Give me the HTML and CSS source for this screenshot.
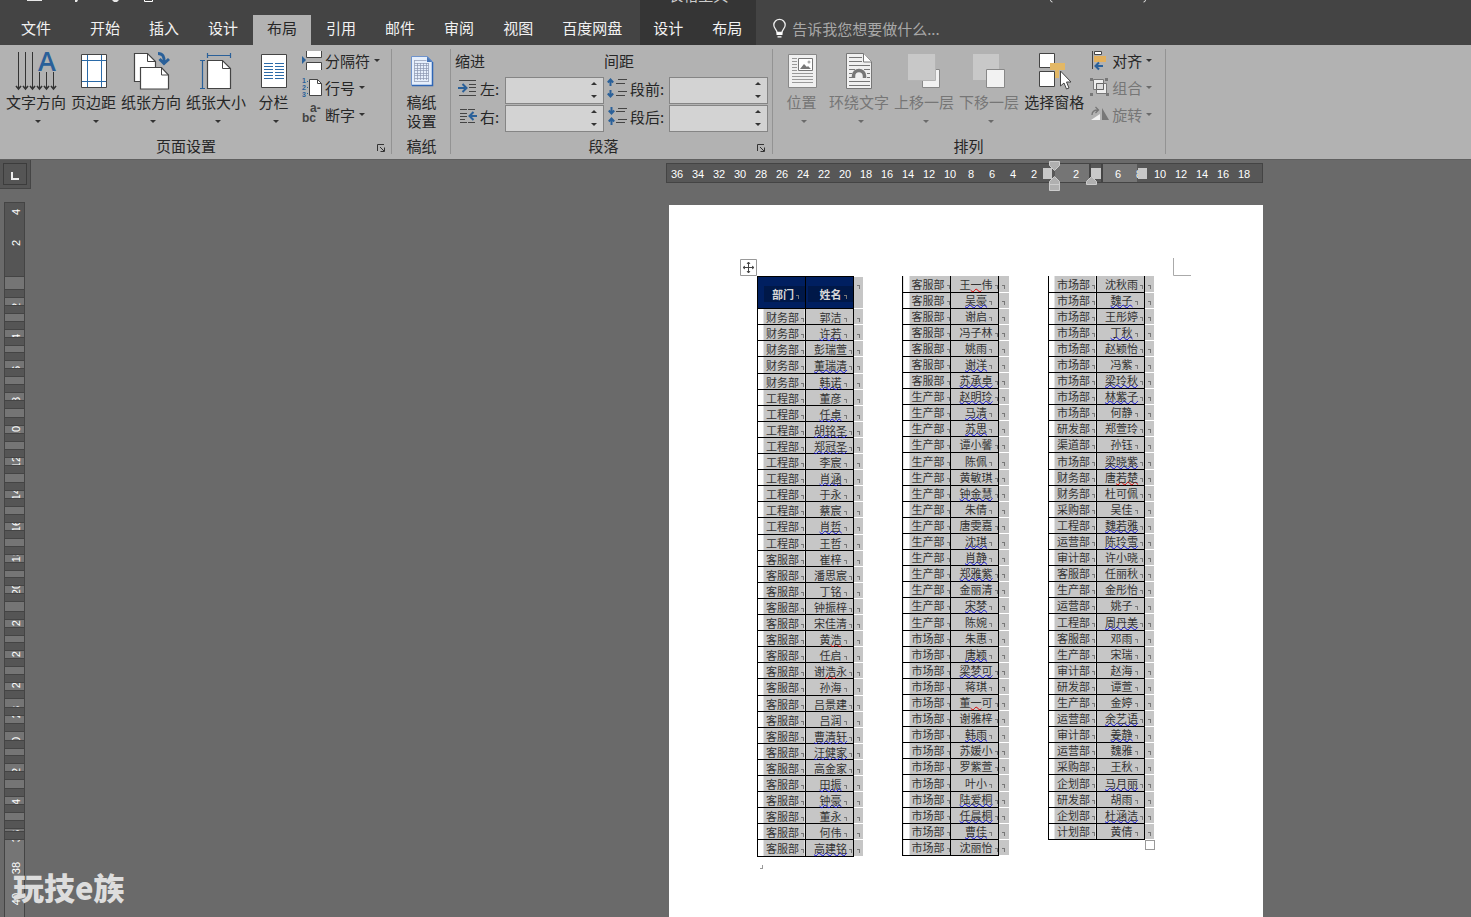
FILE: index.html
```html
<!DOCTYPE html>
<html lang="zh-CN">
<head>
<meta charset="utf-8">
<title>Word</title>
<link rel="stylesheet" href="styles.css">
</head>
<body>
<header class="top">
  <div class="titlebar">
    <svg class="title-bits" width="1160" height="6" aria-hidden="true"><path d="M27 0h15v1H27zM75 0h3l-1 2h-2zM112 0h7l-2 2h-3z" fill="#e8e8e8"/><path d="M144.500 0v1.500h8V0" fill="none" stroke="#fff"/><path d="M1050.500 0q0 2 2 2M1145.500 0q0 2-2 2" fill="none" stroke="#ddd"/></svg>
  </div>
  <nav class="tabs">
    <button class="tab file">文件</button>
    <button class="tab">开始</button>
    <button class="tab">插入</button>
    <button class="tab">设计</button>
    <button class="tab active">布局</button>
    <button class="tab">引用</button>
    <button class="tab">邮件</button>
    <button class="tab">审阅</button>
    <button class="tab">视图</button>
    <button class="tab">百度网盘</button>
    <div class="context">
      <span class="context-name">表格工具</span>
      <button class="tab">设计</button>
      <button class="tab">布局</button>
    </div>
    <button class="tell">
      <svg width="13" height="19" viewBox="0 0 13 19"><path d="M4 13.500C4 10.500.8 9.500.8 6a5.700 5.700 0 0 1 11.400 0c0 3.500-3.200 4.500-3.200 7.500z" fill="none" stroke="#eee" stroke-width="1.300"/><path d="M3.500 13.500h6v2.500h-6zM4.500 17.200h4v1.300h-4z" fill="#fff"/></svg>
      <span>告诉我您想要做什么...</span>
    </button>
  </nav>
</header>

<section class="ribbon">
  <div class="group page-setup">
    <div class="group-body">
      <button class="big">
        <svg width="42" height="41" viewBox="0 0 42 41"><path d="M3.500 2v36M10.500 2v36M17.500 2v36M24.500 22v16M31.500 22v16M38.500 22v16" stroke="#333"/><path d="M1 36l2.500 3L6 36M8 36l2.500 3 2.500-3M15 36l2.500 3 2.500-3M22 36l2.500 3 2.500-3M29 36l2.500 3 2.500-3M36 36l2.500 3 2.500-3" fill="none" stroke="#333" stroke-width="1.600"/><text class="letter-a" x="32" y="21">A</text></svg>
        <span>文字方向</span><i class="arrow"></i>
      </button>
      <button class="big">
        <svg width="28" height="41" viewBox="0 0 28 41"><path d="M1.500 4.500h25v33h-25z" fill="#fff" stroke="#444"/><path d="M7.500 5v32M21.500 5v32M2 10.500h24M2 31.500h24" stroke="#2a6aa8"/></svg>
        <span>页边距</span><i class="arrow"></i>
      </button>
      <button class="big">
        <svg width="40" height="41" viewBox="0 0 40 41"><path d="M3.500 3.500h13l8 8v20h-21z" fill="#fff" stroke="#444" stroke-width="1.200"/><path d="M16.500 3.500v8h8" fill="none" stroke="#444"/><path d="M9.500 17.500h21l7 7.500v14h-28z" fill="#fff" stroke="#444" stroke-width="1.200"/><path d="M30.500 17.500V25h7" fill="none" stroke="#444"/><path d="M27 3.500q7 0 6 9M28.500 9l4.500 4.500L38 9" fill="none" stroke="#2a6099" stroke-width="3"/></svg>
        <span>纸张方向</span><i class="arrow"></i>
      </button>
      <button class="big">
        <svg width="34" height="41" viewBox="0 0 34 41"><path d="M8.500 10.500h15l8 8v20h-23z" fill="#fff" stroke="#444" stroke-width="1.200"/><path d="M23.500 10.500v8h8" fill="none" stroke="#444"/><path d="M8.500 3v5M31.500 3v5M8.500 5.500h23M1 10.500h5M1 38.500h5M3.500 10.500v28" fill="none" stroke="#2a6099" stroke-width="1.200"/></svg>
        <span>纸张大小</span><i class="arrow"></i>
      </button>
      <button class="big">
        <svg width="28" height="41" viewBox="0 0 28 41"><path d="M1.500 4.500h25v33h-25z" fill="#fff" stroke="#444"/><path d="M4 13.500h9M15 13.500h9M4 16.500h9M15 16.500h9M4 19.500h9M15 19.500h9M4 22.500h9M15 22.500h9M4 25.500h9M15 25.500h9M4 28.500h9M15 28.500h9" stroke="#2a6aa8"/></svg>
        <span>分栏</span><i class="arrow"></i>
      </button>
      <div class="small-stack">
        <button class="small">
          <svg width="21" height="20" viewBox="0 0 21 20"><path d="M4.500 1v6.500h15V1M4.500 20v-7.500h15V20" fill="#fff" stroke="#444"/><path d="M0 6l4 4-4 4z" fill="#2a6099"/></svg>
          <span>分隔符</span><i class="arrow"></i>
        </button>
        <button class="small">
          <svg width="21" height="20" viewBox="0 0 21 20"><path d="M7.500 2.500h8l4 4v12h-12z" fill="#fff" stroke="#444"/><path d="M15.500 2.500v4h4" fill="none" stroke="#444"/><g class="digits"><text x="0" y="6">1</text><text x="0" y="13">2</text><text x="0" y="20">3</text></g><path d="M5.500 4v1M5.500 10v1M5.500 16v1" stroke="#2a6099"/></svg>
          <span>行号</span><i class="arrow"></i>
        </button>
        <button class="small">
          <svg width="21" height="20" viewBox="0 0 21 20"><g class="abc"><text x="8" y="8">a-</text><text x="0" y="18">bc</text></g></svg>
          <span>断字</span><i class="arrow"></i>
        </button>
      </div>
    </div>
    <div class="group-foot"><span>页面设置</span><button class="launcher" aria-label="页面设置选项"><svg width="8" height="8" viewBox="0 0 8 8"><path d="M.5 7V.5H7M3 3l4 4M7.500 3.500v4h-4" fill="none" stroke="#333"/></svg></button></div>
  </div>

  <div class="group manuscript">
    <div class="group-body">
      <button class="big">
        <svg width="24" height="41" viewBox="0 0 24 41"><path d="M1.500 6.500h16l5 5v24h-21z" fill="#e6effc" stroke="#6f93cc"/><path d="M22.500 12v23.500H2" fill="none" stroke="#2f66b5" stroke-width="1.500"/><path d="M17 6.500v5.500h5.500z" fill="#4a78b8"/><path d="M4.500 10.500h12M4.500 13.500h14M4.500 15.500h14M4.500 18.500h14M4.500 20.500h14M4.500 23.500h14M4.500 25.500h14M4.500 28.500h14M4.500 31.500h14M4.500 10v22M7.500 13v17M10.500 13v17M13.500 13v17M16.500 13v17M18.500 13v19" stroke="#8b97b0" stroke-width=".7"/></svg>
        <span>稿纸<br>设置</span>
      </button>
    </div>
    <div class="group-foot"><span>稿纸</span></div>
  </div>

  <div class="group paragraph">
    <div class="group-body fields">
      <div class="heading">缩进</div>
      <div class="heading">间距</div>
      <div class="field">
        <label for="indent-left"><svg width="19" height="18" viewBox="0 0 19 18"><path d="M1 1.500h17M11 5.500h7M11 8.500h7M11 12.500h7M1 16.500h17" stroke="#444"/><path d="M0 9h7M4.500 5l4 4-4 4" fill="none" stroke="#2a6099" stroke-width="2"/></svg>左:</label>
        <div class="spin"><input id="indent-left" type="text"><i class="up"></i><i class="down"></i></div>
      </div>
      <div class="field">
        <label for="space-before"><svg width="20" height="20" viewBox="0 0 20 20"><path d="M11 1.500h9M9 5.500h9M11 13.500h9M9 17.500h9" stroke="#444"/><path d="M3.500 2v6M3.500 12v6M.8 4.500L3.500 1.500l2.700 3M.8 15.500l2.700 3 2.700-3" fill="none" stroke="#2a6099" stroke-width="2"/></svg>段前:</label>
        <div class="spin"><input id="space-before" type="text"><i class="up"></i><i class="down"></i></div>
      </div>
      <div class="field">
        <label for="indent-right"><svg width="19" height="18" viewBox="0 0 19 18"><path d="M2 2.500h16M2 6.500h7M2 9.500h7M2 12.500h5M2 15.500h16" stroke="#444" stroke-dasharray="7 1"/><path d="M19 9h-6M15.500 5l-4 4 4 4" fill="none" stroke="#2a6099" stroke-width="2"/></svg>右:</label>
        <div class="spin"><input id="indent-right" type="text"><i class="up"></i><i class="down"></i></div>
      </div>
      <div class="field">
        <label for="space-after"><svg width="20" height="20" viewBox="0 0 20 20"><path d="M11 2.500h9M9 5.500h9M11 13.500h9M9 16.500h9" stroke="#444"/><path d="M4.500 1v6M4.500 13v6M1.800 4.500l2.700 3 2.700-3M1.800 15.500l2.700-3 2.700 3" fill="none" stroke="#2a6099" stroke-width="2"/></svg>段后:</label>
        <div class="spin"><input id="space-after" type="text"><i class="up"></i><i class="down"></i></div>
      </div>
    </div>
    <div class="group-foot"><span>段落</span><button class="launcher" aria-label="段落选项"><svg width="8" height="8" viewBox="0 0 8 8"><path d="M.5 7V.5H7M3 3l4 4M7.500 3.500v4h-4" fill="none" stroke="#333"/></svg></button></div>
  </div>

  <div class="group arrange">
    <div class="group-body">
      <button class="big" disabled>
        <svg width="30" height="41" viewBox="0 0 30 41"><path d="M1.500 4.500h28v33h-28z" fill="#f0f0f0" stroke="#888"/><path d="M11.500 8.500h14v12h-14z" fill="#fff" stroke="#777"/><path d="M13 19l4-5 3 3 1-1 3 3z" fill="#777"/><circle cx="22" cy="12" r="1.500" fill="#aaa"/><path d="M5 8.500h5M5 11.500h5M5 14.500h5M5 17.500h5M5 20.500h5M5 23.500h21M5 26.500h21M5 29.500h21M5 32.500h21" stroke="#999"/></svg>
        <span>位置</span><i class="arrow"></i>
      </button>
      <button class="big" disabled>
        <svg width="28" height="41" viewBox="0 0 28 41"><path d="M1.500 3.500h17l8 8v27h-25z" fill="#f0f0f0" stroke="#777"/><path d="M18.500 3.500v8.500h8" fill="#fff" stroke="#777"/><path d="M4 7.500h13M4 11.500h13M4 15.500h21M4 19.500h6M19 19.500h6M4 23.500h3M22 23.500h3M4 27.500h3M22 27.500h3M4 31.500h21M4 35.500h21" stroke="#777"/><path d="M8.500 28v-2a5.500 5.500 0 0 1 11 0v2" fill="none" stroke="#777" stroke-width="3.500"/></svg>
        <span>环绕文字</span><i class="arrow"></i>
      </button>
      <button class="big" disabled>
        <svg width="34" height="41" viewBox="0 0 34 41"><path d="M15.500 19.500h17v18h-17z" fill="#f2f2f2" stroke="#888"/><path d="M1 4h27v26H1z" fill="#c8c8c8"/><path d="M1 30.500h27.500V5" fill="none" stroke="#b4b4b4"/></svg>
        <span>上移一层</span><i class="arrow"></i>
      </button>
      <button class="big" disabled>
        <svg width="34" height="41" viewBox="0 0 34 41"><path d="M1 4h26v26H1z" fill="#c8c8c8"/><path d="M14.500 19.500h18v18h-18z" fill="#f2f2f2" stroke="#888"/></svg>
        <span>下移一层</span><i class="arrow"></i>
      </button>
      <button class="big">
        <svg width="34" height="41" viewBox="0 0 34 41"><path d="M2.500 3.500h15v14h-15zM2.500 21.500h15v15h-15z" fill="#fff" stroke="#444"/><path d="M13 13h15v7h-6v8h-4v-8h-5z" fill="#e3b866"/><path d="M23.500 21v15l3.500-3 2.500 6 2.500-1-2.500-6h4.500z" fill="#fff" stroke="#444"/></svg>
        <span>选择窗格</span>
      </button>
      <div class="small-stack">
        <button class="small">
          <svg width="20" height="20" viewBox="0 0 20 20"><path d="M2.500 1v18" stroke="#444"/><path d="M4.500 1.500h7v3h-7z" fill="#fff" stroke="#444"/><path d="M4 6h12v6H4z" fill="#e3b05c"/><path d="M13 16H6M9 12.500L5.500 16 9 19.500" fill="none" stroke="#2a6099" stroke-width="2"/></svg>
          <span>对齐</span><i class="arrow"></i>
        </button>
        <button class="small" disabled>
          <svg width="20" height="20" viewBox="0 0 20 20"><path d="M3.500 2.500h10v10h-10zM6.500 6.500h10v10h-10z" fill="#eee" stroke="#777"/><path d="M6.500 6.500h7v6h-7z" fill="#ddd" stroke="#666"/><path d="M0 1h3v3H0zM15 1h3v3h-3zM0 16h3v3H0zM16 16h3v3h-3z" fill="#777"/></svg>
          <span>组合</span><i class="arrow"></i>
        </button>
        <button class="small" disabled>
          <svg width="20" height="20" viewBox="0 0 20 20"><path d="M12 4l7 12h-7z" fill="#777"/><path d="M1 16l9-6v6z" fill="#f2f2f2"/><path d="M2 11q0-5 6-5M5.500 3L8.500 6l-3 3" fill="none" stroke="#777" stroke-width="1.300"/></svg>
          <span>旋转</span><i class="arrow"></i>
        </button>
      </div>
    </div>
    <div class="group-foot"><span>排列</span></div>
  </div>
</section>

<main class="workspace">
  <aside class="side">
    <button class="tab-stop" aria-label="左对齐制表符"><span><svg width="8" height="8" viewBox="0 0 8 8"><path d="M1 0v7h7" fill="none" stroke="#eee" stroke-width="2"/></svg></span></button>
    <svg class="v-ruler" width="21" height="760" viewBox="0 203 21 760">
      <path d="M0 203h20v760H0z" fill="#757575"/>
      <g class="v-num">
        <text transform="translate(16 307) rotate(-90)">2</text><text transform="translate(16 338) rotate(-90)">4</text><text transform="translate(16 370) rotate(-90)">6</text><text transform="translate(16 401) rotate(-90)">8</text><text transform="translate(16 433) rotate(-90)">10</text><text transform="translate(16 463) rotate(-90)">12</text><text transform="translate(16 495) rotate(-90)">14</text><text transform="translate(16 527) rotate(-90)">16</text><text transform="translate(16 557) rotate(-90)">18</text><text transform="translate(16 590) rotate(-90)">20</text><text transform="translate(16 621) rotate(-90)">22</text><text transform="translate(16 652) rotate(-90)">24</text><text transform="translate(16 683) rotate(-90)">26</text><text transform="translate(16 713) rotate(-90)">28</text><text transform="translate(16 744) rotate(-90)">30</text><text transform="translate(16 775) rotate(-90)">32</text><text transform="translate(16 806) rotate(-90)">34</text><text transform="translate(16 837) rotate(-90)">36</text><text transform="translate(16 869) rotate(-90)">38</text><text transform="translate(16 900) rotate(-90)">40</text>
      </g>
      <path fill="#555" stroke="#444" d="M.5 203.500h20v74H.5zM.5 290.500h20v8H.5zM.5 306.500h20v8H.5zM.5 322.500h20v8H.5zM.5 338.500h20v8H.5zM.5 353.500h20v8H.5zM.5 369.500h20v8H.5zM.5 385.500h20v8H.5zM.5 401.500h20v8H.5zM.5 418.500h20v8H.5zM.5 434.500h20v8H.5zM.5 450.500h20v8H.5zM.5 466.500h20v8H.5zM.5 483.500h20v8H.5zM.5 499.500h20v8H.5zM.5 515.500h20v8H.5zM.5 531.500h20v8H.5zM.5 547.500h20v8H.5zM.5 563.500h20v8H.5zM.5 578.500h20v8H.5zM.5 594.500h20v8H.5zM.5 612.500h20v8H.5zM.5 628.500h20v8H.5zM.5 643.500h20v8H.5zM.5 659.500h20v8H.5zM.5 675.500h20v8H.5zM.5 691.500h20v8H.5zM.5 708.500h20v8H.5zM.5 724.500h20v8H.5zM.5 741.500h20v8H.5zM.5 756.500h20v8H.5zM.5 772.500h20v8H.5zM.5 789.500h20v8H.5zM.5 805.500h20v8H.5zM.5 821.500h20v8H.5zM.5 832.500h20v8H.5z"/>
      <path d="M.5 203v760M20.500 203v760" stroke="#444"/>
      <g class="v-num"><text transform="translate(16 213) rotate(-90)">4</text><text transform="translate(16 244) rotate(-90)">2</text></g>
    </svg>
  </aside>

  <div class="canvas">
    <div class="h-ruler">
      <span>36</span><span>34</span><span>32</span><span>30</span><span>28</span><span>26</span><span>24</span><span>22</span><span>20</span><span>18</span><span>16</span><span>14</span><span>12</span><span>10</span><span>8</span><span>6</span><span>4</span><span>2</span><span></span><span>2</span><span></span><span>6</span><span>8</span><span>10</span><span>12</span><span>14</span><span>16</span><span>18</span>
      <svg class="markers" width="110" height="32" viewBox="1040 160 110 32"><path d="M1089 164h2v19h-2zM1101 164h2v19h-2z" fill="#444"/><path d="M1043 168h9v11h-9zM1091 168h10v11h-10zM1138 168h9v11h-9z" fill="#c9c9c9"/><path d="M1049.500 161.500h10v4l-5 5-5-5zM1054.500 176.500l5 5v9h-10v-9zM1049.500 184.500h10M1091.500 176.500l5 5v3h-10v-3z" fill="#b0b0b0" stroke="#ccc"/></svg>
    </div>
    <article class="page">
      <svg class="move" width="18" height="18" viewBox="0 0 18 18"><path d="M.5.5h16v16H.5z" fill="#fff" stroke="#999"/><path d="M8.500 3v11M3 8.500h11M7 5l1.500-2L10 5M7 12l1.500 2 1.500-2M5 7L3 8.500 5 10M12 7l2 1.500-2 1.500" fill="none" stroke="#444"/></svg>
      <svg class="crop" width="18" height="18" viewBox="0 0 18 18"><path d="M.5 0v17.500H18" fill="none" stroke="#aaa"/></svg>
      <table class="roster first">
        <thead><tr><th><span>部门</span><th><span>姓名</span><td></thead>
        <tbody>
        <tr><td>财务部<td>郭洁<td>
        <tr><td>财务部<td><u>许若</u><td>
        <tr><td>财务部<td>彭瑞萱<td>
        <tr><td>财务部<td><u>董瑞清</u><td>
        <tr><td>财务部<td><u>韩诺</u><td>
        <tr><td>工程部<td>董彦<td>
        <tr><td>工程部<td><u>任卓</u><td>
        <tr><td>工程部<td><u>胡铭圣</u><td>
        <tr><td>工程部<td><u>郑冠圣</u><td>
        <tr><td>工程部<td>李宸<td>
        <tr><td>工程部<td><u>肖涵</u><td>
        <tr><td>工程部<td>于永<td>
        <tr><td>工程部<td>蔡宸<td>
        <tr><td>工程部<td><u>肖哲</u><td>
        <tr><td>工程部<td>王哲<td>
        <tr><td>客服部<td>崔梓<td>
        <tr><td>客服部<td>潘思宸<td>
        <tr><td>客服部<td>丁铭<td>
        <tr><td>客服部<td>钟振梓<td>
        <tr><td>客服部<td>宋佳清<td>
        <tr><td>客服部<td>黄<s>浩</s><td>
        <tr><td>客服部<td>任启<td>
        <tr><td>客服部<td>谢<s>浩</s>永<td>
        <tr><td>客服部<td>孙海<td>
        <tr><td>客服部<td>吕景建<td>
        <tr><td>客服部<td>吕润<td>
        <tr><td>客服部<td><u>曹清轩</u><td>
        <tr><td>客服部<td><u>汪健家</u><td>
        <tr><td>客服部<td>高金家<td>
        <tr><td>客服部<td><u>田振</u><td>
        <tr><td>客服部<td><u>钟豪</u><td>
        <tr><td>客服部<td>董永<td>
        <tr><td>客服部<td>何伟<td>
        <tr><td>客服部<td><u>高建铭</u><td>
        </tbody>
      </table>
      <table class="roster">
        <tbody>
        <tr><td>客服部<td>王<s>一</s>伟<td>
        <tr><td>客服部<td><u>吴豪</u><td>
        <tr><td>客服部<td>谢启<td>
        <tr><td>客服部<td>冯子林<td>
        <tr><td>客服部<td>姚雨<td>
        <tr><td>客服部<td><u>谢洋</u><td>
        <tr><td>客服部<td><u>苏承卓</u><td>
        <tr><td>生产部<td><u>赵明玲</u><td>
        <tr><td>生产部<td><u>马清</u><td>
        <tr><td>生产部<td><u>苏思</u><td>
        <tr><td>生产部<td>谭小馨<td>
        <tr><td>生产部<td>陈佩<td>
        <tr><td>生产部<td>黄敏琪<td>
        <tr><td>生产部<td><u>钟金慧</u><td>
        <tr><td>生产部<td>朱倩<td>
        <tr><td>生产部<td>唐雯嘉<td>
        <tr><td>生产部<td><u>沈琪</u><td>
        <tr><td>生产部<td><u>肖静</u><td>
        <tr><td>生产部<td><u>郑雅紫</u><td>
        <tr><td>生产部<td>金丽清<td>
        <tr><td>生产部<td><u>宋梦</u><td>
        <tr><td>生产部<td>陈婉<td>
        <tr><td>市场部<td>朱惠<td>
        <tr><td>市场部<td><u>唐颖</u><td>
        <tr><td>市场部<td><u>梁梦可</u><td>
        <tr><td>市场部<td>蒋琪<td>
        <tr><td>市场部<td>董<s>一</s>可<td>
        <tr><td>市场部<td>谢雅梓<td>
        <tr><td>市场部<td><u>韩雨</u><td>
        <tr><td>市场部<td>苏媛小<td>
        <tr><td>市场部<td>罗紫萱<td>
        <tr><td>市场部<td>叶小<td>
        <tr><td>市场部<td><u>陆爱桐</u><td>
        <tr><td>市场部<td><u>任晨桐</u><td>
        <tr><td>市场部<td><u>曹佳</u><td>
        <tr><td>市场部<td>沈丽怡<td>
        </tbody>
      </table>
      <div class="last">
      <table class="roster">
        <tbody>
        <tr><td>市场部<td>沈秋雨<td>
        <tr><td>市场部<td><u>魏子</u><td>
        <tr><td>市场部<td>王彤婷<td>
        <tr><td>市场部<td><u>丁秋</u><td>
        <tr><td>市场部<td>赵颖怡<td>
        <tr><td>市场部<td>冯紫<td>
        <tr><td>市场部<td><u>梁玲秋</u><td>
        <tr><td>市场部<td><u>林紫子</u><td>
        <tr><td>市场部<td>何静<td>
        <tr><td>研发部<td>郑萱玲<td>
        <tr><td>渠道部<td>孙钰<td>
        <tr><td>市场部<td><u>梁晓紫</u><td>
        <tr><td>财务部<td>唐<s>若楚</s><td>
        <tr><td>财务部<td>杜可佩<td>
        <tr><td>采购部<td>吴佳<td>
        <tr><td>工程部<td><u>魏若雅</u><td>
        <tr><td>运营部<td><u>陈玲雪</u><td>
        <tr><td>审计部<td>许小晓<td>
        <tr><td>客服部<td>任丽秋<td>
        <tr><td>生产部<td>金彤怡<td>
        <tr><td>运营部<td>姚子<td>
        <tr><td>工程部<td><u>周丹美</u><td>
        <tr><td>客服部<td>邓雨<td>
        <tr><td>生产部<td>宋瑞<td>
        <tr><td>审计部<td>赵海<td>
        <tr><td>研发部<td>谭萱<td>
        <tr><td>生产部<td>金婷<td>
        <tr><td>运营部<td><u>余艺语</u><td>
        <tr><td>审计部<td><u>姜静</u><td>
        <tr><td>运营部<td>魏雅<td>
        <tr><td>采购部<td>王秋<td>
        <tr><td>企划部<td><u>马月丽</u><td>
        <tr><td>研发部<td>胡雨<td>
        <tr><td>企划部<td><u>杜涵洁</u><td>
        <tr><td>计划部<td>黄倩<td>
        </tbody>
      </table>
      <div class="resize"></div>
      </div>
      <div class="para-end"></div>
    </article>
  </div>
  <div class="watermark">玩技<span>e</span>族</div>
</main>
</body>
</html>
```

FILE: styles.css
```css
* { box-sizing: border-box; }

body {
  margin: 0;
  height: 100vh;
  display: flex;
  flex-direction: column;
  overflow: hidden;
  background: #6a6a6a;
  color: #262626;
  font: 15px/19px "Noto Sans CJK SC", sans-serif;
}

button {
  margin: 0;
  padding: 0;
  border: 0;
  background: none;
  color: inherit;
  font: inherit;
  white-space: nowrap;
}

svg { display: block; flex: none; overflow: visible; }

/* Title strip and tabs */
.top { flex: none; background: #444; overflow: hidden; }
.titlebar { height: 15px; overflow: hidden; }
.tabs { display: flex; gap: 1px; height: 30px; }
.tab { padding: 0 14px 6px; color: #f2f2f2; }
.file { padding: 0 24px 6px 21px; }
.tab.active { background: #b2b2b2; color: #262626; }

.context {
  position: relative;
  display: flex;
  gap: 1px;
  margin: -15px 0 0 3px;
  padding-top: 15px;
  background: #353535;
}
.context .tab { padding: 0 14px 6px 13px; }
.context .tab:last-child { padding-left: 14px; }
.context-name {
  position: absolute;
  top: -15px;
  left: 0;
  right: 0;
  text-align: center;
  color: #ccc;
}

.tell {
  display: flex;
  align-items: center;
  gap: 6px;
  padding: 0 16px 4px;
  color: #a8a8a8;
}

/* Ribbon */
.ribbon {
  display: flex;
  flex: none;
  height: 115px;
  background: #b2b2b2;
  border-bottom: 1px solid #606060;
}
.group {
  position: relative;
  display: flex;
  flex-direction: column;
  justify-content: space-between;
  padding: 5px 12px 4px 6px;
}
.group::after {
  content: "";
  position: absolute;
  top: 4px;
  bottom: 5px;
  right: 0;
  width: 1px;
  background: #939393;
}
.group-body { display: flex; gap: 5px; }
.big {
  display: flex;
  flex-direction: column;
  align-items: center;
  min-width: 45px;
}
.big svg { margin-bottom: 1px; }
button:disabled { color: #767676; }

.letter-a {
  fill: #2a6099;
  font: 600 27px "Open Sans", sans-serif;
  text-anchor: middle;
}
.digits { fill: #2a6099; font: bold 7px "Liberation Sans", sans-serif; }
.abc { fill: #444; font: bold 12px "Liberation Sans", sans-serif; }

.arrow {
  width: 0;
  height: 0;
  border: 3px solid transparent;
  border-top-color: #333;
  border-bottom: 0;
}
.big .arrow { margin: 9px 0 0 4px; }
button:disabled .arrow { border-top-color: #6a6a6a; }

.small-stack { display: flex; flex-direction: column; gap: 7px; padding-left: 1px; }
.small { display: flex; align-items: center; height: 20px; gap: 2px; }
.small .arrow { margin: 1px 0 0 2px; }

.group-foot { display: flex; align-items: center; }
.group-foot span { flex: 1; text-align: center; }
.launcher { width: 16px; padding: 4px 0 0 5px; }
.page-setup .group-foot { margin-right: -8px; }
.page-setup .launcher { width: 22px; padding-left: 11px; }

.manuscript { padding: 5px 7px 4px; }

.fields {
  display: grid;
  grid-template-columns: 149px 164px;
  grid-template-rows: 25px 26px 26px;
  gap: 2px 0;
}
.paragraph { padding: 5px 5px 4px 4px; }
.arrange { padding-right: 14px; }
.arrange .group-foot { margin-right: -6px; }
.heading { padding-top: 1px; }
.field { display: flex; justify-content: space-between; }
.field label { display: flex; align-items: center; gap: 3px; padding: 0 0 4px 3px; }
.spin { position: relative; width: 99px; }
.spin input {
  display: block;
  width: 100%;
  height: 27px;
  padding: 0 18px 0 4px;
  border: 1px solid #858585;
  background: #d3d3d3;
  font: inherit;
}
.up, .down {
  position: absolute;
  right: 7px;
  border: 3px solid transparent;
}
.up { top: 5px; border-top: 0; border-bottom-color: #333; }
.down { bottom: 5px; border-bottom: 0; border-top-color: #333; }

/* Workspace */
.workspace {
  position: relative;
  display: flex;
  flex: 1;
  min-height: 0;
  overflow: hidden;
}
.side { flex: none; width: 31px; }
.tab-stop {
  display: flex;
  width: 31px;
  height: 29px;
  padding: 3px;
  border: solid #454545;
  border-width: 0 1px 1px 0;
  background: #555;
}
.tab-stop span {
  display: grid;
  place-content: end center;
  flex: 1;
  padding-bottom: 4px;
  border: 1px solid #3c3c3c;
}
.v-ruler { margin: 13px 0 0 4px; }
.v-num {
  fill: #fff;
  font: 11px "Liberation Sans", sans-serif;
  text-anchor: middle;
}

.canvas {
  flex: 1;
  display: grid;
  grid-template-columns: 76fr 597px 25fr;
  grid-template-rows: 20px 1fr;
  row-gap: 22px;
  padding: 3px 0 0 1px;
}
.h-ruler {
  grid-column: 2;
  position: relative;
  display: flex;
  border: 1px solid #444;
  background: linear-gradient(to right, #575757 388px, #757575 388px 422px, #575757 422px 436px, #757575 436px 470px, #575757 470px);
  color: #fff;
  font: 11px/20px "Liberation Sans", sans-serif;
  text-align: center;
}
.h-ruler span { flex: none; width: 21px; }
.markers { position: absolute; top: -4px; left: 373px; }

.page {
  grid-column: 2;
  position: relative;
  display: flex;
  align-items: flex-start;
  gap: 39px;
  margin-left: 3px;
  padding: 71px 0 0 88px;
  background: #fff;
  min-height: 760px;
}
.move { position: absolute; top: 54px; left: 71px; }
.crop { position: absolute; top: 53px; left: 504px; }

.roster {
  flex: none;
  width: 106px;
  table-layout: fixed;
  border-collapse: collapse;
  font-size: 11px;
  line-height: 14px;
  color: #333;
}
.roster tr { height: 16px; }
.first tbody tr:nth-child(10n + 4),
.roster:not(.first) tr:nth-child(10n + 12) { height: 17px; }
.roster td, .roster th {
  width: 48px;
  padding: 0 0 0 8px;
  border: 1px solid #000;
  background: #c6c6c6;
  text-align: center;
  white-space: nowrap;
}
.roster td:first-child {
  padding-left: 8px;
  background: linear-gradient(to right, #fff 6px, #c6c6c6 6px);
}
.roster td:nth-child(3) {
  width: 10px;
  padding: 0;
  border-color: #fff;
  border-right: 0;
  border-left-color: #000;
}
.roster:not(.first) tr:first-child td { border-top: 0; }
.roster td::after, .roster th span::after {
  content: "";
  display: inline-block;
  width: 2px;
  height: 3px;
  margin-left: 2px;
  border: solid #777;
  border-width: 1px 1px 0 0;
}
.roster td:nth-child(3)::after { margin-left: 0; }
.roster thead tr { height: 32px; }
.roster th {
  padding: 2px 0 0 6px;
  background: #001f60;
  color: #d8d8d8;
}
.roster th + th { padding-left: 2px; }
.roster th span {
  display: block;
  padding-left: 3px;
  background: #001848;
  line-height: 16px;
}
.roster th + th span { padding-left: 6px; }
.roster thead td { vertical-align: top; }
.roster u, .roster s {
  text-decoration: underline wavy #1010d8 1px;
  text-decoration-skip-ink: none;
  text-underline-offset: -1px;
}
.roster s { text-decoration-color: #d00; }

.resize { width: 10px; height: 10px; margin-left: 97px; border: 1px solid #999; }
.para-end {
  position: absolute;
  top: 660px;
  left: 91px;
  width: 3px;
  height: 4px;
  border: solid #999;
  border-width: 0 1px 1px 0;
}

.watermark {
  position: absolute;
  left: 13px;
  bottom: 16px;
  color: #ddd;
  font-size: 31px;
  font-weight: 900;
  line-height: 28px;
}
```
